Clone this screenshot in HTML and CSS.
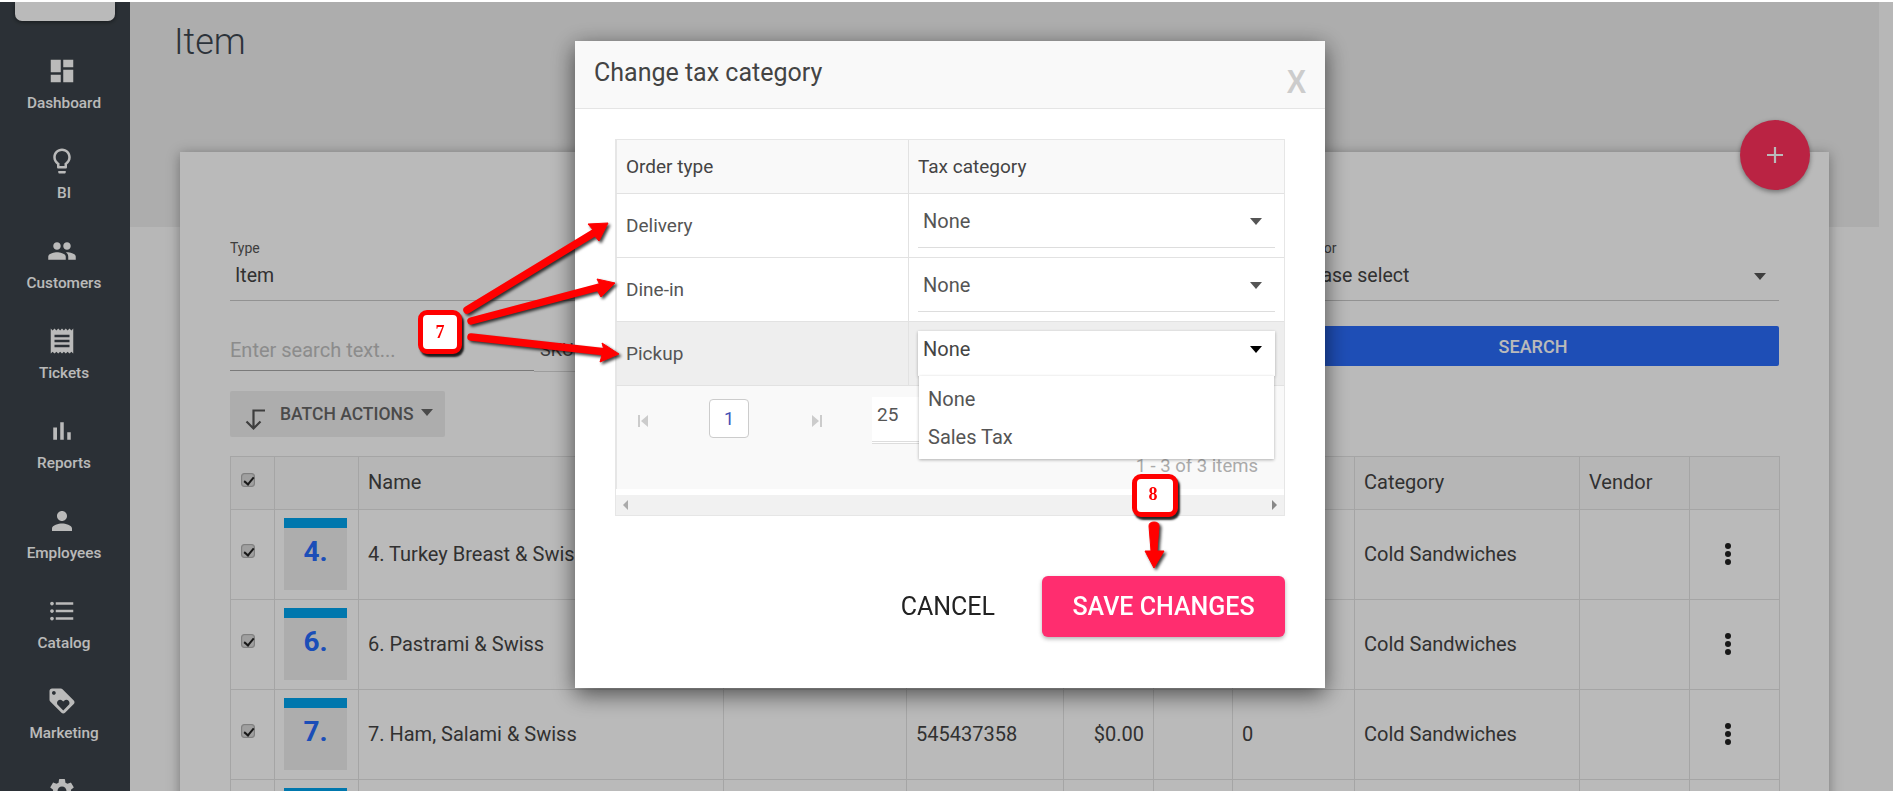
FILE: index.html
```html
<!DOCTYPE html>
<html lang="en">
<head>
<meta charset="utf-8">
<title>Item</title>
<link rel="stylesheet" href="styles.css">
</head>
<body>
<div class="app">
  <aside class="sidebar">
    <div class="logo"></div>
    <nav class="nav">
      <a class="nav-item"><svg viewBox="0 0 24 24"><path d="M3 13h8V3H3v10zm0 8h8v-6H3v6zm10 0h8V11h-8v10zm0-18v6h8V3h-8z"/></svg><span>Dashboard</span></a>
      <a class="nav-item"><svg viewBox="0 0 24 24"><path d="M9 21c0 .55.45 1 1 1h4c.55 0 1-.45 1-1v-1H9v1zm3-19C8.14 2 5 5.14 5 9c0 2.38 1.19 4.47 3 5.74V17c0 .55.45 1 1 1h6c.55 0 1-.45 1-1v-2.26c1.81-1.27 3-3.36 3-5.74 0-3.86-3.14-7-7-7zm2.85 11.1l-.85.6V16h-4v-2.3l-.85-.6C7.8 12.16 7 10.63 7 9c0-2.76 2.24-5 5-5s5 2.24 5 5c0 1.63-.8 3.16-2.15 4.1z"/></svg><span>BI</span></a>
      <a class="nav-item"><svg viewBox="0 0 24 24"><path d="M16 11c1.66 0 2.99-1.34 2.99-3S17.66 5 16 5c-1.66 0-3 1.34-3 3s1.34 3 3 3zm-8 0c1.66 0 2.99-1.34 2.99-3S9.66 5 8 5C6.34 5 5 6.34 5 8s1.34 3 3 3zm0 2c-2.33 0-7 1.17-7 3.5V19h14v-2.5c0-2.33-4.67-3.5-7-3.5zm8 0c-.29 0-.62.02-.97.05 1.16.84 1.97 1.97 1.97 3.45V19h6v-2.5c0-2.33-4.67-3.5-7-3.5z"/></svg><span>Customers</span></a>
      <a class="nav-item"><svg viewBox="0 0 24 24"><path d="M18 17H6v-2h12v2zm0-4H6v-2h12v2zm0-4H6V7h12v2zM3 22l1.5-1.5L6 22l1.5-1.5L9 22l1.5-1.5L12 22l1.5-1.5L15 22l1.5-1.5L18 22l1.5-1.5L21 22V2l-1.5 1.5L18 2l-1.5 1.5L15 2l-1.5 1.5L12 2l-1.5 1.5L9 2 7.5 3.5 6 2 4.5 3.5 3 2v20z"/></svg><span>Tickets</span></a>
      <a class="nav-item"><svg viewBox="0 0 24 24"><path d="M5 9.2h3V19H5zM10.6 5h2.8v14h-2.8zm5.6 8H19v6h-2.8z"/></svg><span>Reports</span></a>
      <a class="nav-item"><svg viewBox="0 0 24 24"><path d="M12 12c2.21 0 4-1.79 4-4s-1.79-4-4-4-4 1.79-4 4 1.79 4 4 4zm0 2c-2.67 0-8 1.34-8 4v2h16v-2c0-2.66-5.33-4-8-4z"/></svg><span>Employees</span></a>
      <a class="nav-item"><svg viewBox="0 0 24 24"><path d="M4 10.5c-.83 0-1.5.67-1.5 1.5s.67 1.5 1.5 1.5 1.5-.67 1.5-1.5-.67-1.5-1.5-1.5zm0-6c-.83 0-1.5.67-1.5 1.5S3.17 7.5 4 7.5 5.5 6.83 5.5 6 4.83 4.5 4 4.5zm0 12c-.83 0-1.5.68-1.5 1.5s.68 1.5 1.5 1.5 1.5-.68 1.5-1.5-.67-1.5-1.5-1.5zM7 19h14v-2H7v2zm0-6h14v-2H7v2zm0-8v2h14V5H7z"/></svg><span>Catalog</span></a>
      <a class="nav-item"><svg viewBox="0 0 24 24"><path d="M21.41 11.58l-9-9C12.05 2.22 11.55 2 11 2H4c-1.1 0-2 .9-2 2v7c0 .55.22 1.05.59 1.42l9 9c.36.36.86.58 1.41.58s1.05-.22 1.41-.59l7-7c.37-.36.59-.86.59-1.41s-.23-1.06-.59-1.42zM5.5 7C4.67 7 4 6.33 4 5.5S4.67 4 5.5 4 7 4.67 7 5.5 6.33 7 5.5 7zm11.77 8.27L13 19.54l-4.27-4.27C8.28 14.81 8 14.19 8 13.5c0-1.38 1.12-2.5 2.5-2.5.69 0 1.32.28 1.77.74l.73.72.73-.73c.45-.45 1.08-.73 1.77-.73 1.38 0 2.5 1.12 2.5 2.5 0 .69-.28 1.32-.73 1.77z"/></svg><span>Marketing</span></a>
      <a class="nav-item"><svg viewBox="0 0 24 24"><path d="M19.14 12.94c.04-.3.06-.61.06-.94 0-.32-.02-.64-.07-.94l2.03-1.58a.49.49 0 00.12-.61l-1.92-3.32a.488.488 0 00-.59-.22l-2.39.96c-.5-.38-1.03-.7-1.62-.94l-.36-2.54a.484.484 0 00-.48-.41h-3.84c-.24 0-.43.17-.47.41l-.36 2.54c-.59.24-1.13.57-1.62.94l-2.39-.96c-.22-.08-.47 0-.59.22L2.74 8.87c-.12.21-.08.47.12.61l2.03 1.58c-.05.3-.09.63-.09.94s.02.64.07.94l-2.03 1.58a.49.49 0 00-.12.61l1.92 3.32c.12.22.37.29.59.22l2.39-.96c.5.38 1.03.7 1.62.94l.36 2.54c.05.24.24.41.48.41h3.84c.24 0 .44-.17.47-.41l.36-2.54c.59-.24 1.13-.56 1.62-.94l2.39.96c.22.08.47 0 .59-.22l1.92-3.32c.12-.22.07-.47-.12-.61l-2.01-1.58zM12 15.6c-1.98 0-3.6-1.62-3.6-3.6s1.62-3.6 3.6-3.6 3.6 1.62 3.6 3.6-1.62 3.6-3.6 3.6z"/></svg></a>
    </nav>
  </aside>

  <main class="main">
    <header class="band"><h1 class="page-title">Item</h1></header>
    <section class="card">
      <div class="filters">
        <div class="field field-type"><label>Type</label><div class="value">Item</div></div>
        <div class="field field-cat"><label>Category</label><div class="value">Please select</div></div>
        <div class="field field-vendor"><label>Vendor</label><div class="value">Please select<i class="caret"></i></div></div>
      </div>
      <div class="searchrow">
        <div class="input input-text">Enter search text...</div>
        <div class="input input-sku">SKU</div>
        <button class="btn-search">SEARCH</button>
      </div>
      <div class="batch">
        <svg viewBox="0 0 24 24"><path d="M22 3.500H10.500V21M3.500 14.500l7 7 7-7"/></svg>
        <span>BATCH ACTIONS</span><i class="caret"></i>
      </div>
      <table class="items">
        <colgroup><col class="c1"><col class="c2"><col class="c3"><col class="c4"><col class="c5"><col class="c6"><col class="c7"><col class="c8"><col class="c9"><col class="c10"><col class="c11"></colgroup>
        <thead>
          <tr><th><input type="checkbox" checked></th><th></th><th>Name</th><th>Description</th><th>SKU</th><th>Price</th><th></th><th>Stock</th><th>Category</th><th>Vendor</th><th></th></tr>
        </thead>
        <tbody>
          <tr><td><input type="checkbox" checked></td><td><div class="thumb"><b>4.</b></div></td><td>4. Turkey Breast &amp; Swiss</td><td></td><td>545437356</td><td class="num">$0.00</td><td></td><td>0</td><td>Cold Sandwiches</td><td></td><td class="more"><i></i><i></i><i></i></td></tr>
          <tr><td><input type="checkbox" checked></td><td><div class="thumb"><b>6.</b></div></td><td>6. Pastrami &amp; Swiss</td><td></td><td>545437357</td><td class="num">$0.00</td><td></td><td>0</td><td>Cold Sandwiches</td><td></td><td class="more"><i></i><i></i><i></i></td></tr>
          <tr><td><input type="checkbox" checked></td><td><div class="thumb"><b>7.</b></div></td><td>7. Ham, Salami &amp; Swiss</td><td></td><td>545437358</td><td class="num">$0.00</td><td></td><td>0</td><td>Cold Sandwiches</td><td></td><td class="more"><i></i><i></i><i></i></td></tr>
          <tr><td><input type="checkbox" checked></td><td><div class="thumb"></div></td><td></td><td></td><td></td><td></td><td></td><td></td><td></td><td></td><td></td></tr>
        </tbody>
      </table>
    </section>
    <div class="fab"><svg viewBox="0 0 24 24"><path d="M12 4v16M4 12h16"/></svg></div>
  </main>
</div>

<div class="overlay"></div>

<div class="modal">
  <div class="modal-head"><h2>Change tax category</h2><span class="close">X</span></div>
  <div class="modal-body">
    <div class="grid">
      <div class="g-row g-head"><div>Order type</div><div>Tax category</div></div>
      <div class="g-row"><div>Delivery</div><div class="g-sel"><div class="sel">None<i class="caret"></i></div></div></div>
      <div class="g-row"><div>Dine-in</div><div class="g-sel"><div class="sel">None<i class="caret"></i></div></div></div>
      <div class="g-row g-active"><div>Pickup</div><div class="g-sel"><div class="sel sel-open">None<i class="caret"></i></div></div></div>
      <div class="pager">
        <div class="pager-top">
          <svg class="pg-first" viewBox="0 0 12 14"><path d="M1 1h2v12H1zM11 1v12L4 7z"/></svg>
          <span class="pg-num">1</span>
          <svg class="pg-last" viewBox="0 0 12 14"><path d="M9 1h2v12H9zM1 1v12l7-6z"/></svg>
          <span class="pg-size">25</span>
        </div>
        <div class="pg-info">1 - 3 of 3 items</div>
      </div>
      <div class="hscroll"><i class="arr-l"></i><i class="arr-r"></i></div>
      <ul class="dropdown"><li>None</li><li>Sales Tax</li></ul>
    </div>
    <div class="actions">
      <button class="btn-cancel">CANCEL</button>
      <button class="btn-save">SAVE CHANGES</button>
    </div>
  </div>
</div>

<svg class="arrows" viewBox="0 0 1893 791">
  <g class="shafts">
    <path d="M467 310L597 231"/>
    <path d="M471 321L603 286"/>
    <path d="M471 337L606 352"/>
  </g>
  <g class="heads">
    <path d="M608 223L588 224L594 231L593 234L599 241Z"/>
    <path d="M615 283L597 279L600 285L597 290L601 297Z"/>
    <path d="M619 354L602 343L604 350L602 355L600 362Z"/>
    <path d="M1149 526Q1149 522 1154 522Q1159 522 1159 526L1157 551L1164 551L1154 568L1145 551L1151 551Z"/>
  </g>
</svg>
<div class="marker marker-7">7</div>
<div class="marker marker-8">8</div>
</body>
</html>
```
FILE: styles.css
```css
* { box-sizing: border-box; }
html, body { margin: 0; height: 791px; overflow: hidden; }
body { background: #fff; font-family: Roboto, "Liberation Sans", sans-serif; color: #444; }

.app { display: flex; height: 789px; margin-top: 2px; background: #fbfbfb; overflow: hidden; }

/* Sidebar */
.sidebar { width: 130px; flex: none; background: #3c434a; position: relative; }
.logo { width: 100px; height: 19px; margin-left: 15px; background: #fff; border-radius: 0 0 7px 7px; box-shadow: 0 1px 4px rgba(0,0,0,.5); }
.nav { display: flex; flex-direction: column; padding-top: 35px; }
.nav-item { height: 90px; flex: none; display: flex; flex-direction: column; align-items: center; color: #fff; font-size: 15.300px; font-weight: 500; padding-right: 2px; }
.nav-item svg { width: 30px; height: 30px; fill: #fff; margin-left: -4px; }
.nav-item span { margin-top: 6.500px; line-height: 20px; }

/* Main */
.main { flex: 1; min-width: 0; position: relative; }
.band { height: 225px; margin-right: 14px; background: #ededed; padding: 16px 0 0 44px; }
.page-title { margin: 0; font-size: 36px; line-height: 48px; font-weight: 300; color: #3d4650; }
.card { position: absolute; left: 50px; top: 150px; width: 1649px; height: 760px; background: #fff; box-shadow: 0 2px 12px rgba(0,0,0,.35); padding: 86px 50px 0; }

.filters { display: grid; grid-template-columns: 520px 512px 487px; column-gap: 15px; }
.field { height: 63px; border-bottom: 1px solid #c8c8c8; position: relative; }
.field label { display: block; font-size: 14px; line-height: 20px; color: #555; }
.value { font-size: 19.500px; line-height: 26px; margin-top: 5px; padding-left: 5px; color: #444; position: relative; }
.field-vendor .value { padding-left: 2px; }
.caret { display: block; width: 0; height: 0; border-left: 6.500px solid transparent; border-right: 6.500px solid transparent; border-top: 7px solid #555; }
.value .caret { position: absolute; right: 13px; top: 10px; }

.searchrow { display: flex; align-items: flex-start; margin-top: 25px; }
.input { font-size: 20px; height: 45px; line-height: 48px; border-bottom: 1px solid #a8a8a8; }
.input-text { width: 304px; color: #c0c0c0; }
.input-sku { width: 753px; height: 46px; border-color: #d8d8d8; padding-left: 6px; color: #555; font-size: 18px; }
.btn-search { flex: none; width: 492px; height: 40px; background: #2a6bfa; color: #fff; border: 0; border-radius: 2px; font: 500 18px Roboto, sans-serif; }

.batch { display: flex; align-items: center; width: 215px; height: 46px; margin-top: 19px; background: #eee; border-radius: 2px; color: #666; font-size: 17.500px; font-weight: 500; padding-left: 13px; }
.batch svg { width: 24px; height: 26px; fill: none; stroke: #555; stroke-width: 2.200; margin-top: 9px; }
.batch span { margin-left: 13px; white-space: nowrap; }
.batch .caret { margin-left: 7px; margin-top: -3px; border-top-color: #666; }

.items { margin-top: 19px; width: 1549px; table-layout: fixed; border-collapse: collapse; font-size: 20px; color: #444; }
.c1 { width: 44px; } .c2 { width: 84px; } .c3 { width: 365px; } .c4 { width: 183px; }
.c5 { width: 157px; } .c6 { width: 90px; } .c7 { width: 79px; } .c8 { width: 122px; }
.c9 { width: 225px; } .c10 { width: 110px; } .c11 { width: 90px; }
.items th, .items td { border: 1px solid #e3e3e3; padding: 0 9px 2px; text-align: left; font-weight: 400; vertical-align: middle; white-space: nowrap; overflow: hidden; }
.items th { height: 53px; background: #fafafa; }
.items td { height: 90px; }
.items th:first-child, .items td:first-child { padding-left: 10px; }
.items input { appearance: none; display: block; width: 14px; height: 14px; margin: -5px 0 0; background: #dcdcdc; border: 1px solid #b0b0b0; border-radius: 3px; box-shadow: inset 0 0 1px #888; position: relative; }
.items input::after { content: ""; position: absolute; left: 4px; top: 1px; width: 4px; height: 8px; border: solid #222; border-width: 0 2px 2px 0; transform: rotate(40deg); }
.items .num { text-align: right; padding-right: 9px; }
.items td:nth-child(2) { padding-left: 9px; padding-bottom: 0; }
.thumb { width: 63px; height: 72px; background: #eee; border-top: 10px solid #00a3ee; text-align: center; font-size: 28px; line-height: 48px; color: #266bfc; margin-top: -2px; }
.thumb b { font-weight: 700; }
.more { padding-left: 35px !important; }
.more i { display: block; width: 6px; height: 6px; border-radius: 50%; background: #222; margin: 2px 0; }

.fab { position: absolute; left: 1610px; top: 118px; width: 70px; height: 70px; border-radius: 50%; background: #ff305c; box-shadow: 0 2px 5px rgba(0,0,0,.4); display: flex; align-items: center; justify-content: center; }
.fab svg { width: 24px; height: 24px; fill: none; stroke: #fff; stroke-width: 2.200; }

/* Overlay + modal */
.overlay { position: fixed; inset: 2px 0 0 0; background: rgba(0,0,0,.27); }
.modal { position: fixed; left: 575px; top: 41px; width: 750px; height: 647px; background: #fff; box-shadow: 0 6px 22px rgba(0,0,0,.6); display: flex; flex-direction: column; }
.modal-head { height: 68px; flex: none; background: #f9f9f9; border-bottom: 1px solid #e5e5e5; display: flex; justify-content: space-between; padding: 17px 19px 0; }
.modal-head h2 { margin: 0; font-size: 25px; line-height: 30px; font-weight: 400; color: #444; }
.close { font-family: "Liberation Sans", sans-serif; font-weight: 700; font-size: 33px; color: #ccc; line-height: 38px; margin-top: 5px; transform: scaleX(.88); transform-origin: right; }
.modal-body { flex: 1; padding: 30px 40px 0 40px; position: relative; }

.grid { position: relative; height: 377px; border: 1px solid #e6e6e6; display: flex; flex-direction: column; background: #fff; }
.g-row { display: grid; grid-template-columns: 292px 1fr; height: 64px; flex: none; border-bottom: 1px solid #e2e2e2; font-size: 19px; color: #555; }
.g-row > div { display: flex; align-items: center; padding-left: 9px; border-left: 1px solid #e6e6e6; }
.g-row > div + div { border-left: 1px solid #e2e2e2; }
.g-head { height: 54px; background: #f9f9f9; color: #444; }
.g-active { background: #eee; }
.g-row > .g-sel { align-items: flex-start; padding: 0 9px; }
.sel { width: 100%; height: 54px; border-bottom: 1px solid #ddd; padding: 14px 0 0 5px; font-size: 20px; line-height: 26px; color: #555; position: relative; }
.sel .caret { position: absolute; right: 13px; top: 24px; }
.sel-open { height: 45px; margin-top: 9px; padding-top: 5px; background: #fff; border: 0; box-shadow: 0 1px 3px rgba(0,0,0,.3); color: #444; }
.sel-open .caret { top: 15px; border-top-color: #000; }

.pager { height: 103px; background: #f9f9f9; flex: none; position: relative; border-left: 1px solid #e6e6e6; }
.pager-top { display: flex; align-items: flex-start; height: 60px; padding: 13px 0 0 20px; }
.pg-first, .pg-last { width: 12px; height: 14px; fill: #ccc; margin-top: 15px; }
.pg-num { width: 40px; height: 39px; margin-left: 60px; border: 1px solid #ccc; border-radius: 4px; background: #fff; color: #3f51b5; font-size: 18px; line-height: 37px; text-align: center; }
.pg-last { margin-left: 62px; }
.pg-size { width: 60px; height: 47px; margin-left: 49px; margin-top: -2px; background: #fff; border-bottom: 3px double #ddd; padding-left: 5px; font-size: 19px; line-height: 36px; color: #555; }
.pg-info { position: absolute; right: 26px; top: 68px; font-size: 18.500px; line-height: 24px; color: #aaa; }
.hscroll { margin-top: 6px; flex: 1; background: #f1f1f1; display: flex; align-items: center; justify-content: space-between; padding: 0 7px; }
.arr-l, .arr-r { display: block; width: 0; height: 0; border-top: 5.500px solid transparent; border-bottom: 5.500px solid transparent; }
.arr-l { border-right: 5px solid #aaa; }
.arr-r { border-left: 5px solid #888; }

.dropdown { position: absolute; left: 303px; top: 236px; width: 355px; height: 83px; margin: 0; padding: 4px 0 0; list-style: none; background: #fff; box-shadow: 0 1px 3px rgba(0,0,0,.3); font-size: 20px; color: #555; }
.dropdown li { height: 38px; line-height: 38px; padding-left: 9px; }

.actions { display: flex; justify-content: flex-end; align-items: center; margin-top: 60px; }
.btn-cancel { border: 0; background: none; font: 400 25px Roboto, sans-serif; color: #222; margin-right: 47px; padding: 0; }
.btn-save { width: 243px; height: 61px; border: 0; border-radius: 6px; background: #ff2d6f; color: #fff; font: 500 25px Roboto, sans-serif; box-shadow: 0 2px 4px rgba(0,0,0,.3); }

/* Annotations */
.arrows { position: fixed; left: 0; top: 0; width: 1893px; height: 791px; pointer-events: none; filter: drop-shadow(2px 2px 1.500px rgba(0,0,0,.75)); }
.shafts path { stroke: #f00; stroke-width: 7.500; stroke-linecap: round; fill: none; }
.heads path { fill: #f00; stroke: #f00; stroke-width: 1; }
.marker { position: fixed; background: #fff; border: 5.500px solid #f00; border-radius: 9px; box-shadow: 2px 3px 2px rgba(0,0,0,.85); color: #f00; font-family: "Liberation Serif", serif; font-weight: 700; font-size: 18px; display: flex; align-items: center; justify-content: center; }
.marker-7 { left: 418px; top: 310px; width: 44px; height: 44px; }
.marker-8 { left: 1132px; top: 474px; width: 46px; height: 43px; padding-right: 4px; padding-bottom: 3px; }
```
